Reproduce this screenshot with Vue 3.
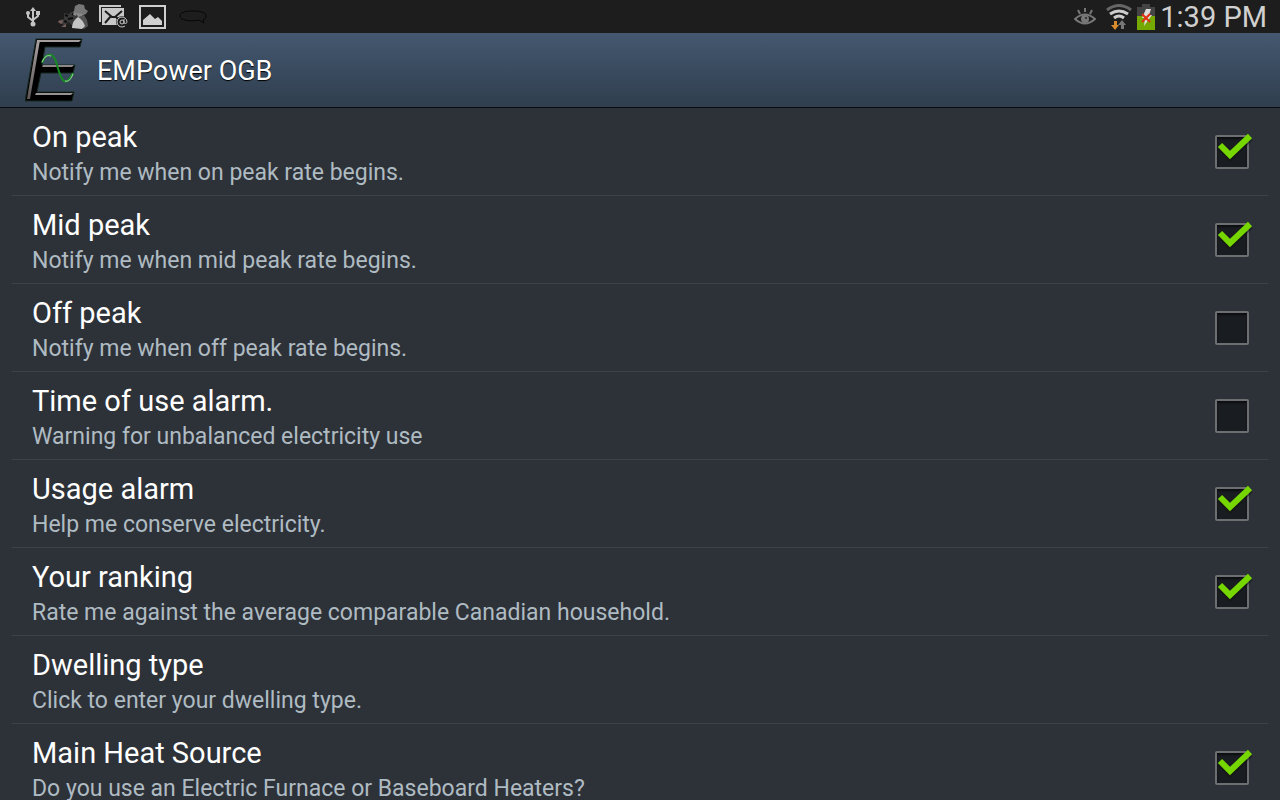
<template>
	<div class="screen">
		<header class="status-bar">
			<div class="notifications">
				<svg class="usb" width="14" height="20" viewBox="0 0 14 20">
					<g fill="none" stroke="#c4c4c4" stroke-width="2">
						<path d="M7 3v14M2 6v4l5 4M12 6v3l-5 4" />
					</g>
					<g fill="#c4c4c4">
						<path d="M7 0l3 4H4z" />
						<circle cx="7" cy="17" r="2.5" />
						<circle cx="2" cy="6" r="2" />
						<path d="M10 4h4v4h-4z" />
					</g>
				</svg>
				<svg class="camera" width="30" height="26" viewBox="0 0 30 26">
					<path d="M16 7l1-5 4-2 5 1 1 4 3 2-2 3-5 2-6-1-3-2z" fill="#777" />
					<path d="M17 9l8 1-2 4-4-1z" fill="#8c8c8c" />
					<path d="M20 13l6-2 3 5 1 6-4 3-5-4z" fill="#555" />
					<path d="M1 16l5-1V9l5 1 2-2 5 1 2 4-2 5-5 3-2-3-5 4z" fill="#3a3a3a" />
					<path d="M7 11l3 1M14 10l3 1M10 15l5-1M6 17l3 1" stroke="#0c0c0c" stroke-width="2" />
					<path d="M0 17l5-1-1 4-3-1zM3 23l5-3v3z" fill="#765f5c" />
					<path d="M16 8l3 1-1 3-3-1z" fill="#888" />
					<path d="M20 13q5 3 7 9l-3 3-10-1q0-7 6-11z" fill="#c4c4c4" />
				</svg>
				<svg class="mail" width="29" height="23" viewBox="0 0 29 23">
					<path d="M1 17V1h21" fill="none" stroke="#c9c9c9" stroke-width="2" />
					<path d="M3 3h22v17H3z" fill="#c9c9c9" />
					<path d="M6 6l7 6h3l7-6M6 18l6-7M17 12l3 3" fill="none" stroke="#1d1d1d" stroke-width="2" />
					<circle cx="23" cy="17" r="6" fill="#1d1d1d" />
					<circle cx="23" cy="17" r="2" fill="none" stroke="#c9c9c9" />
					<path d="M25 14v4c2 1 3 0 3-1a5 5 0 1 0-2 4" fill="none" stroke="#c9c9c9" />
				</svg>
				<svg class="gallery" width="27" height="24" viewBox="0 0 27 24">
					<path d="M1 1h25v22H1z" fill="none" stroke="#d0d0d0" stroke-width="2" />
					<path d="M4 20v-5l7-6 5 5 3-2 4 4v4z" fill="#d0d0d0" />
				</svg>
				<svg class="bubble" width="29" height="15" viewBox="0 0 29 15">
					<path
						d="M20 11C10 13 1 11 1 7S8 2 14 2s13 1 13 5c0 2-1 3-3 4l1 3-5-3"
						fill="none"
						stroke="#060606"
					/>
				</svg>
			</div>
			<div class="system">
				<svg class="eye" width="22" height="18" viewBox="0 0 22 18">
					<path d="M1 11q10-9 20 0-10 9-20 0z" fill="none" stroke="#777" stroke-width="2" />
					<circle cx="11" cy="11" r="4" fill="#777" />
					<circle cx="12" cy="10" r="1" fill="#222" />
					<path d="M11 0v4M4 2l2 4M18 2l-2 4" stroke="#777" stroke-width="2" />
				</svg>
				<div class="connection">
					<svg class="wifi" width="26" height="26" viewBox="0 0 26 26">
						<g fill="none" stroke-width="3">
							<path d="M1 6q12-9 24 0" stroke="#666" />
							<path d="M4 10q9-6 18 0M8 14q5-4 10 0" stroke="#ccc" />
						</g>
						<path d="M8 17h3v4h2l-4 5-4-5h3z" fill="#d98b2b" />
						<path d="M15 25h3v-4h2l-4-5-4 5h3z" fill="#777" />
					</svg>
					<svg class="battery" width="18" height="26" viewBox="0 0 18 26">
						<path d="M0 3h5V0h8v3h5v23H0z" fill="#444" />
						<path d="M0 12h18v14H0z" fill="#75a800" />
						<path d="M9 5h5l-2 6h3L7 22l1-8H5z" fill="#ddd" />
						<path d="M5 10l8 8M13 10l-8 8" stroke="#e03010" stroke-width="2" />
					</svg>
					<span class="clock">1:39 PM</span>
				</div>
			</div>
		</header>

		<div class="action-bar">
			<svg class="logo" width="58" height="66" viewBox="0 0 58 66">
				<defs>
					<linearGradient id="stem" x1="0" y1="0" x2="0" y2="1">
						<stop offset="0" stop-color="#a8a2a2" />
						<stop offset="1" stop-color="#5c5656" />
					</linearGradient>
				</defs>
				<path
					d="M11 1h46l-2 8H20l-3 18h33l-2 8H16l-4 19h37l-2 9H0z"
					fill="#000"
					stroke="#182820"
				/>
				<path d="M13 2h43l-2 2H14z" fill="#a39d9d" />
				<path d="M18 27h31l-2 2H17z" fill="#8d8787" />
				<path d="M11 55h37l-2 2H10z" fill="#989292" />
				<path d="M12 2h3L5 61H2z" fill="url(#stem)" />
				<path d="M17 25C21 15 28 12 32 27S40 51 48 35" fill="none" stroke="#168a22" stroke-width="2" />
				<path d="M17 24c3-6 5-7 9-6M40 43c4 1 6-2 8-7" fill="none" stroke="#a6e0a6" />
			</svg>
			<h1>EMPower OGB</h1>
		</div>

		<main>
			<ul>
				<li v-for="item in settings" :key="item.id">
					<label v-if="item.checkable" class="setting" :for="item.id">
						<span class="text">
							<span class="title">{{ item.title }}</span>
							<span class="summary">{{ item.summary }}</span>
						</span>
						<span class="check">
							<input type="checkbox" :id="item.id" v-model="item.checked" />
							<svg v-if="item.checked" width="36" height="30" viewBox="0 0 36 30">
								<path d="M3 14l10 10L33 5" fill="none" stroke="#111" stroke-opacity=".5" stroke-width="7" />
								<path d="M3 12l10 10L33 3" fill="none" stroke="#76d600" stroke-width="6" />
							</svg>
						</span>
					</label>
					<button v-else type="button" class="setting">
						<span class="text">
							<span class="title">{{ item.title }}</span>
							<span class="summary">{{ item.summary }}</span>
						</span>
					</button>
				</li>
			</ul>
		</main>
	</div>
</template>

<script setup>
import { ref } from 'vue';

const settings = ref([
	{
		id: 'on-peak',
		title: 'On peak',
		summary: 'Notify me when on peak rate begins.',
		checkable: true,
		checked: true,
	},
	{
		id: 'mid-peak',
		title: 'Mid peak',
		summary: 'Notify me when mid peak rate begins.',
		checkable: true,
		checked: true,
	},
	{
		id: 'off-peak',
		title: 'Off peak',
		summary: 'Notify me when off peak rate begins.',
		checkable: true,
		checked: false,
	},
	{
		id: 'time-of-use',
		title: 'Time of use alarm.',
		summary: 'Warning for unbalanced electricity use',
		checkable: true,
		checked: false,
	},
	{
		id: 'usage',
		title: 'Usage alarm',
		summary: 'Help me conserve electricity.',
		checkable: true,
		checked: true,
	},
	{
		id: 'ranking',
		title: 'Your ranking',
		summary: 'Rate me against the average comparable Canadian household.',
		checkable: true,
		checked: true,
	},
	{
		id: 'dwelling',
		title: 'Dwelling type',
		summary: 'Click to enter your dwelling type.',
		checkable: false,
	},
	{
		id: 'heat-source',
		title: 'Main Heat Source',
		summary: 'Do you use an Electric Furnace or Baseboard Heaters?',
		checkable: true,
		checked: true,
	},
]);
</script>

<style>
body {
	margin: 0;
	background: #2d3138;
}
</style>

<style scoped>
* {
	box-sizing: border-box;
	margin: 0;
	padding: 0;
}

.screen {
	display: flex;
	flex-direction: column;
	height: 100vh;
	font-family: Roboto, 'Liberation Sans', sans-serif;
	color: #fff;
}

svg {
	display: block;
	flex: none;
}

.status-bar {
	display: flex;
	justify-content: space-between;
	align-items: center;
	flex: none;
	height: 33px;
	padding: 0 13px 0 26px;
	background: #1d1d1d;
}

.notifications {
	display: flex;
	align-items: center;
	gap: 11px;
}

.camera {
	margin-left: 7px;
}

.bubble {
	margin-left: 2px;
}

.system {
	display: flex;
	align-items: center;
	gap: 10px;
}

.connection {
	display: flex;
	align-items: center;
	gap: 5px;
}

.clock {
	font-size: 29px;
	line-height: 32px;
	color: #d0d0d0;
}

.action-bar {
	display: flex;
	align-items: center;
	flex: none;
	gap: 14px;
	height: 75px;
	padding: 2px 25px 0;
	background: linear-gradient(#445870, #303e4e);
	border-bottom: 1px solid #080c12;
}

h1 {
	font-size: 27px;
	font-weight: 400;
	line-height: 32px;
	text-shadow: 0 1px 1px #000;
}

main {
	flex: 1;
	min-height: 0;
	overflow-y: auto;
	scrollbar-width: none;
	padding: 0 12px;
}

ul {
	list-style: none;
}

li {
	height: 88px;
	border-bottom: 1px solid #3d4149;
}

.setting {
	display: flex;
	justify-content: space-between;
	align-items: center;
	width: 100%;
	height: 100%;
	padding: 0 19px 0 20px;
	border: none;
	background: none;
	color: inherit;
	font: inherit;
	text-align: left;
	cursor: pointer;
}

.text {
	align-self: flex-start;
	padding-top: 11px;
}

.title,
.summary {
	display: block;
	line-height: 36px;
}

.title {
	font-size: 29px;
}

.summary {
	font-size: 23px;
	color: #afbbc2;
}

.check {
	position: relative;
	flex: none;
}

input {
	display: block;
	appearance: none;
	width: 34px;
	height: 34px;
	border: 2px solid #6d6e70;
	border-radius: 2px;
	background: #191c21;
	box-shadow: inset 0 2px 2px #0c0e11;
	cursor: pointer;
}

.check svg {
	position: absolute;
	top: -2px;
	left: 2px;
	pointer-events: none;
}
</style>
